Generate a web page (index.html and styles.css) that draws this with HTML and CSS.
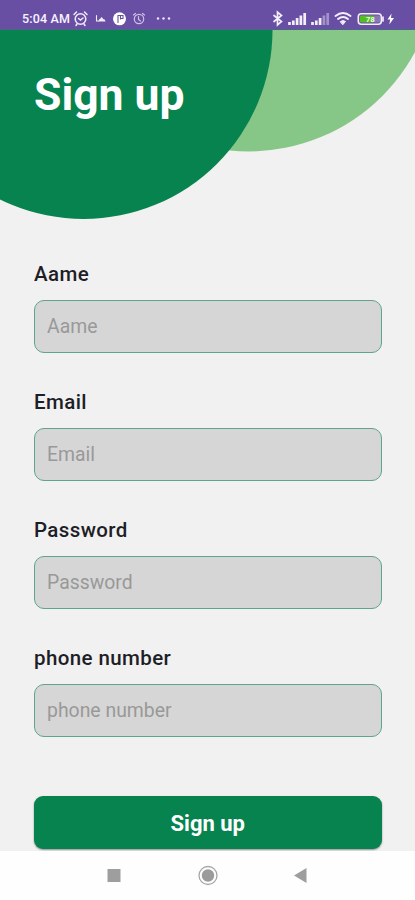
FILE: index.html
```
<!DOCTYPE html>
<html lang="en">
<head>
<meta charset="utf-8">
<title>Sign up</title>
<link rel="stylesheet" href="styles.css">
</head>
<body>
<div class="phone">
  <header class="status">
    <span class="time">5:04 AM</span>
    <svg class="icons-left" width="110" height="20" viewBox="70 8 110 20" fill="none" stroke="#f1eafa" stroke-width="1.5" stroke-linecap="round">
      <circle cx="80.500" cy="19" r="5.300"/><path d="M78.500 18.500l2 1.500 2.500-2M74 14.500l2.500-2.500M87 14.500L84.500 12M77 24l-1 1.500M84 24l1 1.500"/>
      <path d="M96.500 15.500v5.500h2" stroke-width="1.100"/><path d="M98.500 21.500c0-3 2-2 2.500-4 1-1 2 1 2 1.500 2 0 2 1 2.500 2.500z" fill="#f1eafa" stroke="none"/>
      <circle cx="119.500" cy="18.800" r="6.500" fill="#fff" stroke="none"/><path d="M118 22.500v-7h2.500v3.500M120.500 15.500h2.500v3h-2" stroke="#67509f" stroke-width="1.100"/>
      <g stroke="#cfc2e5" stroke-width="1.200"><circle cx="139" cy="19" r="4.700"/><path d="M138.500 16.500v3l2 1.500M133.500 15l2-1.500M144.500 15l-2-1.500"/></g>
      <g fill="#eee8f8" stroke="none"><circle cx="158" cy="18.500" r="1.200"/><circle cx="163.500" cy="18.500" r="1.200"/><circle cx="169" cy="18.500" r="1.200"/></g>
    </svg>
    <svg class="icons-right" width="130" height="20" viewBox="270 8 130 20" fill="none" stroke="#f3eefa" stroke-linecap="round">
      <path d="M274 15.500l7.500 6-4 3.500V12l4 3.500-7.500 6" stroke-width="1.700"/>
      <g stroke-width="2.700" stroke-linecap="butt"><path d="M289.500 25v-3M293.300 25v-4.500M297.100 25v-7M300.900 25v-9.500M304.700 25V13"/><path d="M312.500 25v-3M316.300 25v-4.500M320.100 25v-7"/><path d="M323.900 25v-9.500M327.700 25V13" stroke="#a392c8"/></g>
      <g stroke-width="2"><path d="M335.500 16q7.500-6 15 0M338 19q5-4 10 0"/><path d="M340.500 21.500q2.500-2 5 0l-2.500 3z" fill="#f3eefa" stroke-width="1"/></g>
      <rect x="358.300" y="13.800" width="23" height="10.400" rx="3" stroke-width="1.600"/><rect x="360" y="15.500" width="14" height="7" rx="1" fill="#55bd20" stroke="none"/><path d="M374 15.500h6v7h-6z" fill="#8976b4" stroke="none"/><path d="M383 17v4" stroke-width="1.700"/>
      <text x="370.300" y="22" class="charge">78</text>
      <path d="M391.500 13.500l-4 6h2.700l-.9 5 4.700-6.500h-3z" fill="#fff" stroke="none"/>
    </svg>
  </header>
  <main class="screen">
    <section class="hero">
      <svg class="circles" width="415" height="200" viewBox="0 30 415 200">
        <circle cx="248.500" cy="-37.500" r="189" fill="#86c686"/>
        <circle cx="83.500" cy="30" r="189" fill="#07834f"/>
      </svg>
      <h1>Sign up</h1>
    </section>
    <form class="form">
      <label class="field"><span>Aame</span><input type="text" placeholder="Aame"></label>
      <label class="field"><span>Email</span><input type="text" placeholder="Email"></label>
      <label class="field"><span>Password</span><input type="password" placeholder="Password"></label>
      <label class="field"><span>phone number</span><input type="text" placeholder="phone number"></label>
      <button type="button" class="submit">Sign up</button>
    </form>
  </main>
  <nav class="nav">
    <svg width="415" height="49" viewBox="0 851 415 49">
      <rect x="107.500" y="869" width="13" height="13" fill="#9e9e9e"/>
      <circle cx="208" cy="875.500" r="9" fill="none" stroke="#a6a6a6" stroke-width="1.300"/><circle cx="208" cy="875.500" r="6.200" fill="#9b9b9b"/>
      <path d="M294 875.500l12.500-7.500v15z" fill="#9e9e9e"/>
    </svg>
  </nav>
</div>
</body>
</html>
```
FILE: styles.css
```
* { box-sizing: border-box; }
body { margin: 0; font-family: Roboto, "Liberation Sans", sans-serif; }
.phone { width: 415px; height: 900px; display: flex; flex-direction: column; overflow: hidden; background: #f1f1f1; }
.status { height: 30px; flex: none; padding: 8px 15px 0 22px; display: flex; background: linear-gradient(#684fa4 28px, #4d6585); color: #f8f4ff; }
.time { width: 48px; font-size: 12.5px; font-weight: 500; line-height: 22px; white-space: nowrap; letter-spacing: .15px; }
.status svg { flex: none; }
.icons-right { margin-left: auto; }
.charge { font-size: 8px; font-weight: 700; text-anchor: middle; fill: #eefbe8; stroke: none; }
.screen { height: 821px; flex: none; overflow: hidden; }
.hero { height: 231.500px; position: relative; }
.circles { display: block; position: absolute; top: 0; left: 0; }
h1 { position: relative; margin: 0; padding: 38px 0 0 34px; font-size: 44.500px; line-height: 54px; font-weight: 700; color: #fff; }
.form { padding: 0 33.500px 0 34px; }
.field { height: 128.100px; display: block; color: #1e1e27; }
.field span { display: block; height: 38px; font-size: 20.500px; line-height: 24px; font-weight: 500; letter-spacing: .4px; }
input { display: block; width: 100%; height: 53px; border: 1px solid #5fa58a; border-radius: 10px; padding: 1px 12px 0; background: #d6d6d6; font: 400 19.400px Roboto, sans-serif; outline: 0; }
input::placeholder { color: #999; opacity: 1; }
.submit { display: block; width: 100%; height: 53px; margin-top: 22px; padding: 2px 0 0; border: 0; border-radius: 9px; background: #07834f; color: #fff; font: 700 22px Roboto, sans-serif; box-shadow: 0 1px 2px #0006; }
.nav { height: 49px; flex: none; background: #fefefe; }
.nav svg { display: block; }
```
